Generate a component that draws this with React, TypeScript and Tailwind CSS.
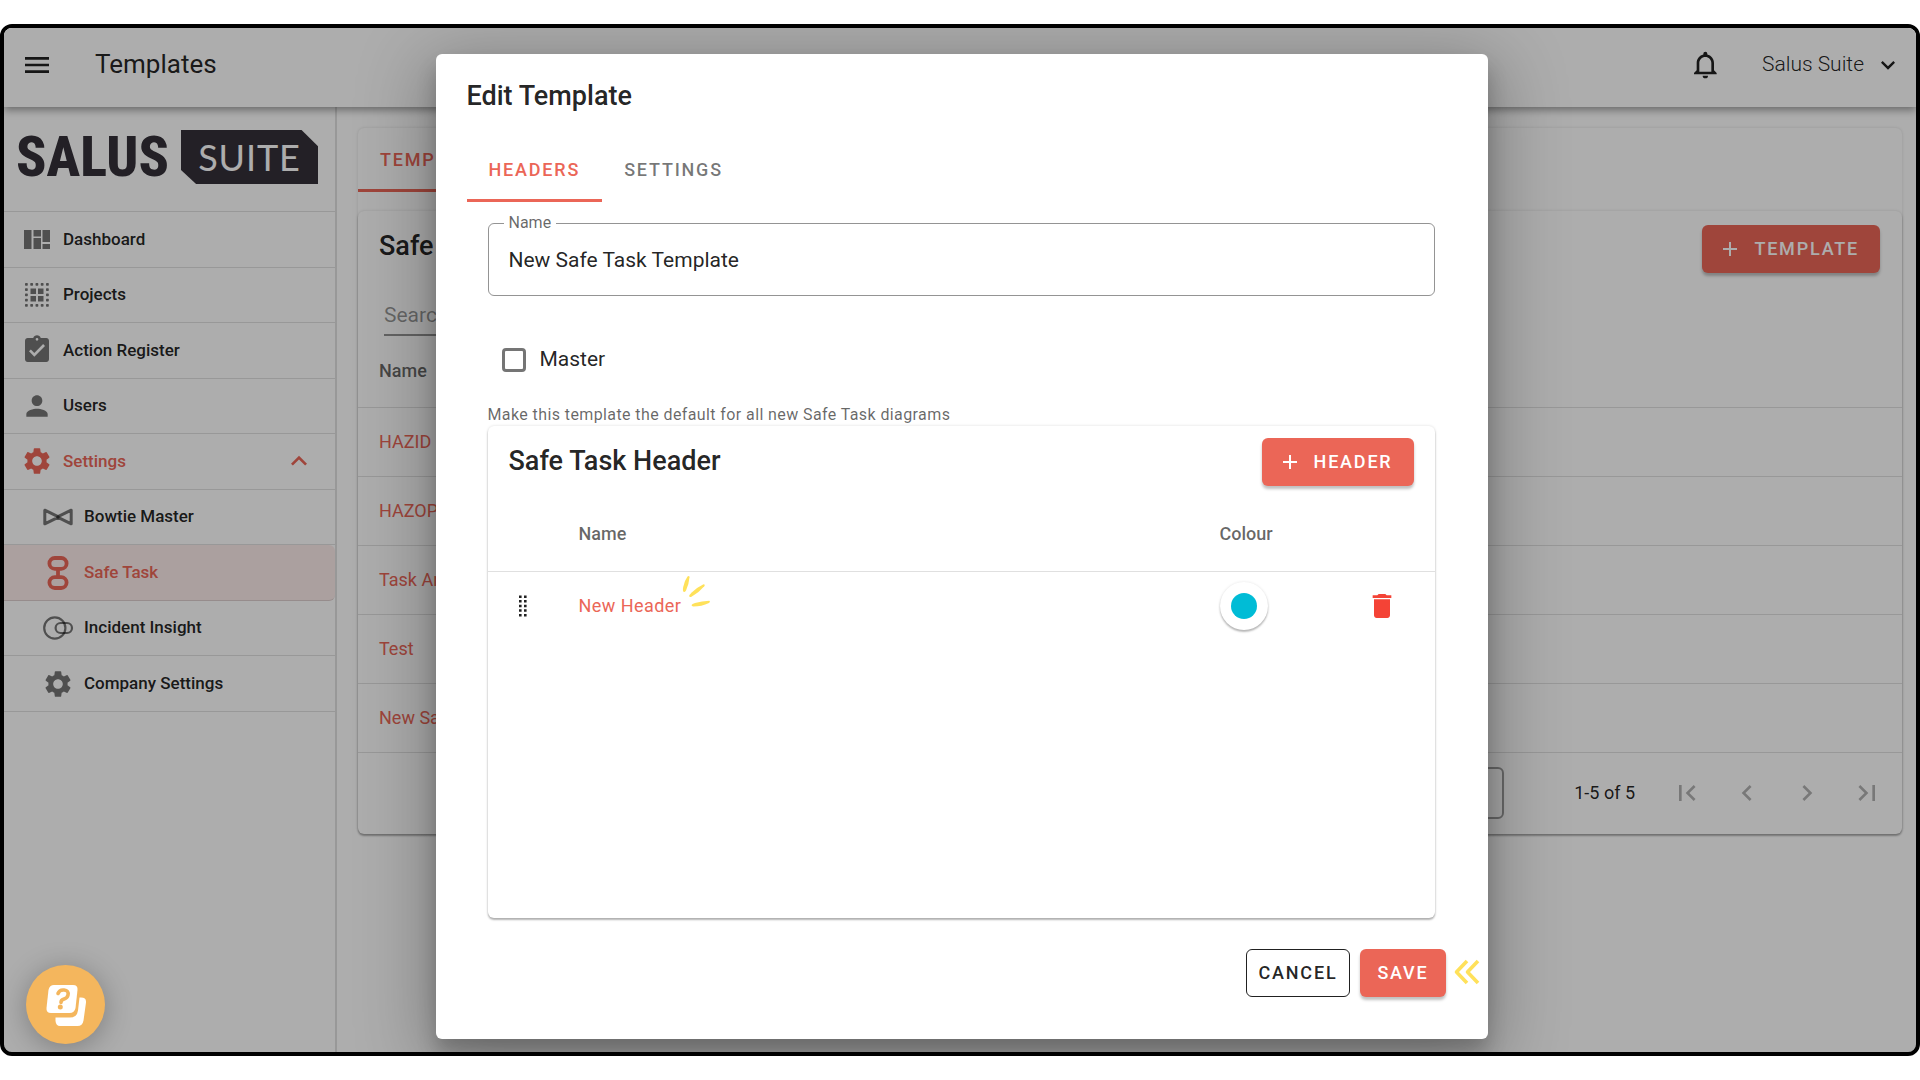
import type { ReactNode } from "react";
import {
  MdAdd,
  MdAssignmentTurnedIn,
  MdChevronLeft,
  MdChevronRight,
  MdDelete,
  MdExpandLess,
  MdExpandMore,
  MdFirstPage,
  MdLastPage,
  MdMenu,
  MdPerson,
  MdSettings,
} from "react-icons/md";

interface NavItem {
  label: string;
  icon: ReactNode;
  sub?: boolean;
  selected?: boolean;
  expanded?: boolean;
}

function DashboardIcon() {
  return (
    <svg viewBox="0 0 32 32" className="size-8" fill="currentColor">
      <path d="M3 7h7.500v19H3zM12.500 7h7.500v6.500h-7.500zM12.500 15h7.500v11h-7.500zM21.500 7H29v12h-7.500zM21.500 21H29v5h-7.500z" />
    </svg>
  );
}

const DOTS = [0, 1, 2, 3, 4];

function ProjectsIcon() {
  return (
    <svg viewBox="0 0 32 32" className="size-8" fill="currentColor">
      {DOTS.map((i) =>
        DOTS.filter((j) => i === 0 || i === 4 || j === 0 || j === 4).map((j) => (
          <rect key={`${i}-${j}`} x={4 + i * 5.25} y={4 + j * 5.25} width="2.8" height="2.8" rx="0.7" />
        ))
      )}
      <path d="M9.500 9.500h5.500v5.500H9.500zM17 9.500h5.500v5.500H17zM9.500 17h5.500v5.500H9.500zM17 17h5.500v5.500H17z" />
    </svg>
  );
}

function BowtieIcon() {
  return (
    <svg viewBox="0 0 32 32" className="size-8" fill="none" stroke="currentColor" strokeWidth="3" strokeLinejoin="round">
      <path d="M2.800 9.200 16 15.600 29.200 9.200v13.600L16 16.400 2.800 22.800z" />
      <circle cx="16" cy="16" r="1.800" fill="currentColor" stroke="none" />
    </svg>
  );
}

function SafeTaskIcon() {
  return (
    <svg viewBox="0 0 32 36" className="h-9 w-8" fill="none" stroke="currentColor" strokeWidth="3.8">
      <rect x="7.400" y="3" width="17.200" height="10.800" rx="5.400" />
      <rect x="7.400" y="22.200" width="17.200" height="10.800" rx="5.400" />
      <path d="M16 13.800v8.400" />
    </svg>
  );
}

function IncidentIcon() {
  return (
    <svg viewBox="0 0 32 32" className="size-8" fill="none" stroke="currentColor" strokeWidth="2.2">
      <circle cx="12.800" cy="16" r="10.600" />
      <rect x="13.600" y="11" width="16.400" height="10" rx="5" />
    </svg>
  );
}

function BellIcon() {
  return (
    <svg viewBox="0 0 24 24" className="size-8" fill="currentColor">
      <path d="M16 17H7v-6.500C7 8 9 6 11.500 6S16 8 16 10.500zm2-1v-5.500c0-3.070-2.140-5.640-5-6.320V3.500a1.500 1.500 0 0 0-3 0v.68c-2.870.68-5 3.250-5 6.320V16l-2 2v1h17v-1zm-6.500 6a2 2 0 0 0 2-2h-4a2 2 0 0 0 2 2z" />
    </svg>
  );
}

const NAV: NavItem[] = [
  { label: "Dashboard", icon: <DashboardIcon /> },
  { label: "Projects", icon: <ProjectsIcon /> },
  { label: "Action Register", icon: <MdAssignmentTurnedIn className="size-8" /> },
  { label: "Users", icon: <MdPerson className="size-8" /> },
  { label: "Settings", icon: <MdSettings className="size-8" />, expanded: true },
  { label: "Bowtie Master", icon: <BowtieIcon />, sub: true },
  { label: "Safe Task", icon: <SafeTaskIcon />, sub: true, selected: true },
  { label: "Incident Insight", icon: <IncidentIcon />, sub: true },
  { label: "Company Settings", icon: <MdSettings className="size-8" />, sub: true },
];

const TEMPLATES = ["HAZID", "HAZOP", "Task Analysis", "Test", "New Safe Task Template"];

const PAGER = [
  { label: "First page", icon: MdFirstPage },
  { label: "Previous page", icon: MdChevronLeft },
  { label: "Next page", icon: MdChevronRight },
  { label: "Last page", icon: MdLastPage },
];

function AddButton({ children }: { children: ReactNode }) {
  return (
    <button
      type="button"
      className="flex h-12 items-center gap-3 rounded-md bg-[#eb6657] pl-4 pr-[21px] text-lg font-medium tracking-widest text-white shadow-[0_3px_3px_rgba(0,0,0,0.25)]"
    >
      <MdAdd className="size-6" />
      {children}
    </button>
  );
}

function Logo() {
  return (
    <a href="#" className="flex h-[105px] items-center gap-4 border-b border-black/12 pb-1 pl-3 text-[#343038]">
      <span className="w-[149px] text-center font-['Roboto_Condensed','Liberation_Sans_Narrow','Roboto',sans-serif] text-[56px] font-extrabold leading-none">
        SALUS
      </span>
      <span className="flex h-[54px] w-[137px] items-center justify-center bg-[#343038] font-['Lato',sans-serif] text-[36px] tracking-wide text-white [clip-path:polygon(0_0,88%_0,100%_30%,100%_100%,11%_100%,0_74%)]">
        SUITE
      </span>
    </a>
  );
}

function Sidebar() {
  return (
    <aside className="w-[333px] shrink-0 border-r-2 border-black/12">
      <Logo />
      <nav className="grid h-[500px] auto-rows-fr text-[17px] font-medium">
        {NAV.map((item) => (
          <a
            key={item.label}
            href="#"
            className={`flex items-center gap-[10px] border-b border-black/12 pr-5 ${item.sub ? "pl-[38px]" : "pl-[17px]"} ${
              item.selected ? "rounded-r-md bg-[#eb6657]/12" : ""
            } ${item.selected || item.expanded ? "text-[#eb6657]" : "text-black/87"}`}
          >
            <span className={item.selected || item.expanded ? "" : "text-black/54"}>{item.icon}</span>
            <span className="flex-1">{item.label}</span>
            {item.expanded && <MdExpandLess className="size-8" />}
          </a>
        ))}
      </nav>
    </aside>
  );
}

function TemplatesPage() {
  return (
    <main className="min-w-0 flex-1 pl-[21px] pr-[14px] pt-[21px]">
      <div className="rounded-md shadow-[0_0_3px_rgba(0,0,0,0.14)]">
        <div className="flex h-[83px] items-start">
          <button
            type="button"
            className="h-16 border-b-3 border-[#eb6657] px-[22px] pt-[2px] text-lg font-medium tracking-widest text-[#eb6657]"
          >
            TEMPLATES
          </button>
        </div>
        <section className="rounded-md shadow-[0_2px_2px_rgba(0,0,0,0.28),0_0_3px_rgba(0,0,0,0.14)]">
          <div className="flex items-start justify-between pl-[21px] pr-[22px] pt-[14px]">
            <h2 className="text-[27px] font-medium leading-[42px]">Safe Task Templates</h2>
            <AddButton>TEMPLATE</AddButton>
          </div>
          <input
            type="search"
            placeholder="Search"
            aria-label="Search"
            className="mx-[26px] mt-[23px] h-10 w-[400px] border-b-2 border-black/42 text-[21px] placeholder:text-black/42"
          />
          <table className="w-full text-left text-lg">
            <thead>
              <tr className="h-[71px] border-b border-black/12">
                <th className="pl-[21px] font-medium text-black/60">Name</th>
              </tr>
            </thead>
            <tbody>
              {TEMPLATES.map((name) => (
                <tr key={name} className="h-[69px] border-b border-black/12">
                  <td className="pl-[21px]">
                    <a href="#" className="text-[#eb6657]">
                      {name}
                    </a>
                  </td>
                </tr>
              ))}
            </tbody>
          </table>
          <div className="flex h-[81px] items-center justify-end pr-[5px] text-lg">
            <select aria-label="Rows per page" className="mr-[70px] h-[52px] w-[120px] appearance-none rounded-md border-2 border-black/38 px-4">
              <option>10</option>
            </select>
            <span className="mr-[22px]">1-5 of 5</span>
            <div className="flex">
              {PAGER.map(({ label, icon: Icon }) => (
                <button key={label} type="button" aria-label={label} disabled className="flex w-[60px] justify-center text-black/30">
                  <Icon className="size-8" />
                </button>
              ))}
            </div>
          </div>
        </section>
      </div>
    </main>
  );
}

function HeadersCard() {
  return (
    <section className="flex-1 rounded-md shadow-[0_2px_2px_rgba(0,0,0,0.28),0_0_3px_rgba(0,0,0,0.14)]">
      <div className="flex items-start justify-between px-[21px] pt-[12px]">
        <h3 className="text-[27px] font-medium leading-[46px]">Safe Task Header</h3>
        <AddButton>HEADER</AddButton>
      </div>
      <table className="mt-[11px] w-full table-fixed text-left text-lg">
        <thead>
          <tr className="h-[74px] border-b border-black/12 text-black/60">
            <th className="w-[91px]" aria-label="Reorder" />
            <th className="font-medium">Name</th>
            <th className="w-[135px] font-medium">Colour</th>
            <th className="w-[80px]" aria-label="Delete" />
          </tr>
        </thead>
        <tbody>
          <tr className="h-[70px]">
            <td className="pl-[30px]">
              <svg viewBox="0 0 10 22" className="h-[22px] w-[10px] text-black/87" fill="currentColor">
                {DOTS.map((i) => (
                  <path key={i} d={`M1 ${i * 4.6 + 0.5}h2.600v2.500h-2.600zM6 ${i * 4.6 + 0.5}h2.600v2.500h-2.600z`} />
                ))}
              </svg>
            </td>
            <td>
              <a href="#" className="relative tracking-wide text-[#eb6657]">
                New Header
                <svg viewBox="0 0 30 32" className="absolute -top-5 left-full h-8 w-[30px]" fill="#ffe15a">
                  <path d="M6.500 1.500q2-1.500 2 .8Q8 9 5 15.500q-1 2-2.400 1.200Q1.500 16 2.200 12 3.500 5.500 6.500 1.500z" />
                  <path d="M22.500 9.200q2 .2.800 2Q18 17.500 10.500 21.700q-2.200.8-2.300-.6 0-1.200 2.500-3.600Q16.500 12 22.500 9.200z" />
                  <path d="M28.300 25.800q1.600 1-.3 2.200Q20.500 31.500 12.500 31.500q-2.200-.2-1.900-1.500.3-1 3.400-1.900Q21 26 28.300 25.800z" />
                </svg>
              </a>
            </td>
            <td>
              <button
                type="button"
                aria-label="Colour"
                className="flex size-12 items-center justify-center rounded-full bg-white shadow-[0_2px_2px_rgba(0,0,0,0.26),0_0_3px_rgba(0,0,0,0.1)]"
              >
                <span className="size-[26px] rounded-full bg-[#00bcd6]" />
              </button>
            </td>
            <td className="pl-[11px]">
              <button type="button" aria-label="Delete header" className="block text-[#f44336]">
                <MdDelete className="size-8" />
              </button>
            </td>
          </tr>
        </tbody>
      </table>
    </section>
  );
}

function EditTemplateDialog() {
  return (
    <div className="absolute inset-0 z-20 flex justify-center bg-black/32 pb-[13px] pl-[3px] pt-[26px]">
      <div
        role="dialog"
        aria-labelledby="dialog-title"
        className="flex w-[1052px] flex-col rounded-md bg-white pb-[42px] pt-[21px] shadow-[0_14px_20px_rgba(0,0,0,0.2),0_16px_70px_10px_rgba(0,0,0,0.28)]"
      >
        <h2 id="dialog-title" className="pl-[31px] text-[27px] font-medium leading-[42px]">
          Edit Template
        </h2>
        <div role="tablist" className="mt-[21px] flex pl-[31px] text-lg font-medium tracking-widest">
          <button role="tab" aria-selected="true" type="button" className="h-16 border-b-3 border-[#eb6657] px-[22px] pt-[2px] text-[#eb6657]">
            HEADERS
          </button>
          <button role="tab" aria-selected="false" type="button" className="h-16 border-b-3 border-transparent px-[22px] pt-[2px] text-black/54">
            SETTINGS
          </button>
        </div>
        <div className="flex flex-1 flex-col pl-[52px] pr-[53px] pt-[21px]">
          <div className="relative">
            <label htmlFor="template-name" className="absolute -top-3 left-4 bg-white px-[5px] text-base text-black/60">
              Name
            </label>
            <input
              id="template-name"
              defaultValue="New Safe Task Template"
              className="h-[73px] w-full rounded-md border border-black/42 px-5 text-[21px] text-black/87"
            />
          </div>
          <label className="mt-10 flex h-12 items-center gap-[14px] pl-[14px] text-[21px] text-black/87">
            <input type="checkbox" className="size-6 appearance-none rounded-sm border-[3px] border-black/54" />
            Master
          </label>
          <p className="mt-5 text-base leading-[22px] tracking-wide text-black/60">
            Make this template the default for all new Safe Task diagrams
          </p>
          <HeadersCard />
        </div>
        <div className="relative mt-[31px] flex justify-end gap-[10px] pr-[42px] text-lg font-medium tracking-widest">
          <button type="button" className="h-12 rounded-md border border-black/87 px-3">
            CANCEL
          </button>
          <button type="button" className="h-12 rounded-md bg-[#eb6657] px-[17px] text-white shadow-[0_3px_3px_rgba(0,0,0,0.25)]">
            SAVE
          </button>
          <svg
            viewBox="0 0 26 26"
            className="absolute right-2 top-[10px] size-[26px]"
            fill="none"
            stroke="#ffe15a"
            strokeWidth="3.6"
            strokeLinejoin="round"
          >
            <path d="M13 2 2.500 13 13 24M24 2 13.500 13 24 24" />
          </svg>
        </div>
      </div>
    </div>
  );
}

function HelpButton() {
  return (
    <button
      type="button"
      aria-label="Help"
      className="absolute bottom-2 left-[22px] z-30 flex size-[79px] items-center justify-center rounded-full bg-[#f4b65d] shadow-[0_4px_28px_rgba(0,0,0,0.28)]"
    >
      <svg viewBox="0 0 42 42" className="size-[42px]" fill="none">
        <path d="M9 1h19q5 0 4.500 5l-2 18q-1 5-6 5H6q-5 0-4.500-5L3.500 6Q4.500 1 9 1z" fill="#fff" />
        <path d="M36 13.500q5.500 0 5 5l-2.500 18q-1 5.500-6 5.500H15q-4 0-4.500-5v-3.500H25q7 0 8-7l1.500-13z" fill="#fff" />
        <path
          d="M13 9.500q1.500-4 6-3.500 5 .5 4 5-.5 3-4.500 4.200-2.500.8-2.500 3.300"
          stroke="#f4b65d"
          strokeWidth="3.6"
          strokeLinecap="round"
        />
        <circle cx="15.300" cy="23" r="2.500" fill="#f4b65d" />
      </svg>
    </button>
  );
}

export default function App() {
  return (
    <div className="flex min-h-screen bg-white py-6 font-['Roboto',sans-serif] text-black/87">
      <div className="relative flex min-w-0 flex-1 flex-col overflow-hidden rounded-xl border-4 border-black">
        <header className="relative z-10 flex h-[79px] items-center bg-white pb-[6px] pl-[17px] pr-[14px] shadow-[0_3px_8px_rgba(0,0,0,0.4)]">
          <button type="button" aria-label="Menu">
            <MdMenu className="size-8" />
          </button>
          <h1 className="ml-[42px] flex-1 text-[26px]">Templates</h1>
          <button type="button" aria-label="Notifications">
            <BellIcon />
          </button>
          <button type="button" className="ml-10 flex items-center gap-[10px] text-[21px] font-light">
            Salus Suite
            <MdExpandMore className="size-7" />
          </button>
        </header>
        <div className="flex flex-1">
          <Sidebar />
          <TemplatesPage />
        </div>
        <EditTemplateDialog />
        <HelpButton />
      </div>
    </div>
  );
}
